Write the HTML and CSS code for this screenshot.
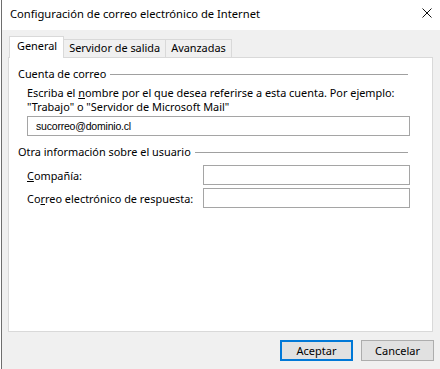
FILE: index.html
```html
<!DOCTYPE html>
<html lang="es">
<head>
  <meta charset="UTF-8" />
  <title>Configuración de correo electrónico de Internet</title>
  <link rel="stylesheet" href="styles.css">
</head>
<body>

<div class="window">
  <div class="titlebar">
    <span class="title">Configuración de correo electrónico de Internet</span>
    <svg class="close" width="10" height="10" viewBox="0 0 10 10">
      <path d="M0.5 0.5 L9.5 9.5 M9.5 0.5 L0.5 9.5" stroke="#111" stroke-width="1" fill="none"/>
    </svg>
  </div>

  <div class="content">
    <div class="tabs">
      <div class="tab active">General</div>
      <div class="tab">Servidor de salida</div>
      <div class="tab">Avanzadas</div>
    </div>

    <div class="panel">
      <div class="group-title"><span>Cuenta de correo</span></div>
      <p class="desc">Escriba el <u>n</u>ombre por el que desea referirse a esta cuenta. Por ejemplo:<br>"Trabajo" o "Servidor de Microsoft Mail"</p>
      <input class="field wide" type="text" value="sucorreo@dominio.cl">

      <div class="group-title second"><span>Otra información sobre el usuario</span></div>
      <div class="row">
        <label><u>C</u>ompañía:</label>
        <input class="field" type="text">
      </div>
      <div class="row">
        <label>Co<u>r</u>reo electrónico de respuesta:</label>
        <input class="field" type="text">
      </div>
    </div>

    <div class="buttons">
      <button class="btn default">Aceptar</button>
      <button class="btn">Cancelar</button>
    </div>
  </div>
</div>

</body>
</html>
```

FILE: styles.css
```css
html, body {
  margin: 0;
  width: 440px;
  height: 369px;
  overflow: hidden;
  background: #ffffff;
}

body {
  font-family: 'Noto Sans', sans-serif;
  font-size: 10.9px;
  color: #000;
}

.window {
  margin-left: 1px;
  height: 369px;
  border-left: 1px solid #6e6e6e;
  display: flex;
  flex-direction: column;
}

.titlebar {
  height: 30px;
  background: #fff;
  display: flex;
  align-items: center;
  justify-content: space-between;
  padding: 0 6px 0 8px;
}

.title {
  font-size: 11.2px;
  line-height: 16px;
  margin-top: -2px;
}

.close {
  margin-right: 2px;
  margin-top: -4px;
}

.content {
  flex: 1;
  background: #f0f0f0;
  padding: 7px 0 0 6px;
}

.tabs {
  display: flex;
  align-items: flex-end;
  height: 20px;
  margin-left: 1px;
  position: relative;
  z-index: 1;
}

.tab {
  height: 17px;
  line-height: 16px;
  padding: 0 5px;
  border: 1px solid #d9d9d9;
  border-bottom: none;
  border-left: none;
  background: #f0f0f0;
}

.tab.active {
  height: 21px;
  line-height: 18px;
  margin-bottom: -1px;
  background: #fff;
  border-left: 1px solid #d9d9d9;
  padding: 0 6px 0 7px;
}

.panel {
  background: #fff;
  border: 1px solid #d9d9d9;
  padding: 9px 0 0 9px;
  box-sizing: border-box;
  height: 275px;
  width: 425px;
}

.group-title {
  display: flex;
  align-items: center;
  width: 390px;
  height: 14px;
  line-height: 14px;
}

.group-title::after {
  content: "";
  flex: 1;
  height: 1px;
  background: #a0a0a0;
  margin-left: 4px;
}

.group-title.second {
  margin-top: 9px;
}

.desc {
  margin: 5px 0 0 9px;
  line-height: 14px;
}

.field {
  display: block;
  box-sizing: border-box;
  height: 20px;
  border: 1px solid #a5a5a5;
  padding: 0 0 0 8px;
  font-family: 'Liberation Sans', sans-serif;
  font-size: 10.5px;
  letter-spacing: -0.2px;
  color: #000;
  outline: none;
  background: #fff;
}

.field.wide {
  width: 383px;
  margin: 2px 0 0 9px;
}

.row {
  display: flex;
  align-items: center;
  margin-left: 9px;
  height: 20px;
}

.row + .row {
  margin-top: 3px;
}

.group-title.second + .row {
  margin-top: 6px;
}

.row label {
  width: 176px;
  white-space: nowrap;
}

.row .field {
  width: 207px;
}

.buttons {
  display: flex;
  justify-content: flex-end;
  gap: 8px;
  margin-top: 8px;
  padding-right: 6px;
}

.btn {
  width: 73px;
  height: 21px;
  box-sizing: border-box;
  background: #e1e1e1;
  border: 1px solid #adadad;
  font-family: 'Noto Sans', sans-serif;
  font-size: 11px;
  padding: 0;
  line-height: 16px;
}

.btn.default {
  border: 2px solid #0078d7;
}
```
